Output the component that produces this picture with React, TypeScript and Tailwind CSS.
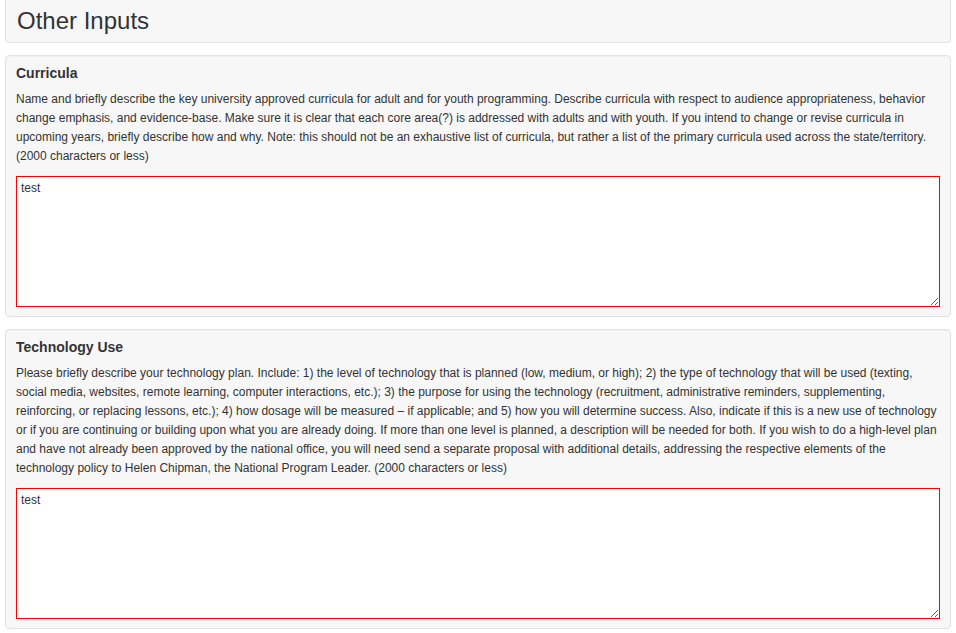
import React from 'react';

interface SectionProps {
  title: string;
  description: string;
  value: string;
}

const Section: React.FC<SectionProps> = ({ title, description, value }) => (
  <div className="mt-[12px] rounded-[4px] border border-[#e3e3e3] bg-[#f7f7f7] px-[10px] pt-[7px] pb-[9px] shadow-[inset_0_1px_1px_rgba(0,0,0,0.03)]">
    <h4 className="text-[14px] font-bold leading-[20px] text-[#333]">{title}</h4>
    <p className="mt-[7px] text-[12px] leading-[19px] text-[#333]">{description}</p>
    <textarea
      className="mt-[10px] block h-[131px] w-full border border-[#f00] bg-white px-[4px] py-[3px] text-[12px] leading-[17px] text-[#333] outline-none"
      defaultValue={value}
    />
  </div>
);

export default function App() {
  return (
    <div className="min-h-screen bg-white px-[5px] pb-[4px] font-['Liberation_Sans',Arial,sans-serif]">
      <div className="rounded-b-[4px] border-x border-b border-[#e3e3e3] bg-[#f7f7f7] px-[11px] pt-[7px] pb-[8px]">
        <h2 className="text-[24px] font-normal leading-[27px] text-[#333]">Other Inputs</h2>
      </div>

      <Section
        title="Curricula"
        description="Name and briefly describe the key university approved curricula for adult and for youth programming. Describe curricula with respect to audience appropriateness, behavior change emphasis, and evidence-base. Make sure it is clear that each core area(?) is addressed with adults and with youth. If you intend to change or revise curricula in upcoming years, briefly describe how and why. Note: this should not be an exhaustive list of curricula, but rather a list of the primary curricula used across the state/territory. (2000 characters or less)"
        value="test"
      />

      <Section
        title="Technology Use"
        description="Please briefly describe your technology plan. Include: 1) the level of technology that is planned (low, medium, or high); 2) the type of technology that will be used (texting, social media, websites, remote learning, computer interactions, etc.); 3) the purpose for using the technology (recruitment, administrative reminders, supplementing, reinforcing, or replacing lessons, etc.); 4) how dosage will be measured – if applicable; and 5) how you will determine success. Also, indicate if this is a new use of technology or if you are continuing or building upon what you are already doing. If more than one level is planned, a description will be needed for both. If you wish to do a high-level plan and have not already been approved by the national office, you will need send a separate proposal with additional details, addressing the respective elements of the technology policy to Helen Chipman, the National Program Leader. (2000 characters or less)"
        value="test"
      />
    </div>
  );
}
